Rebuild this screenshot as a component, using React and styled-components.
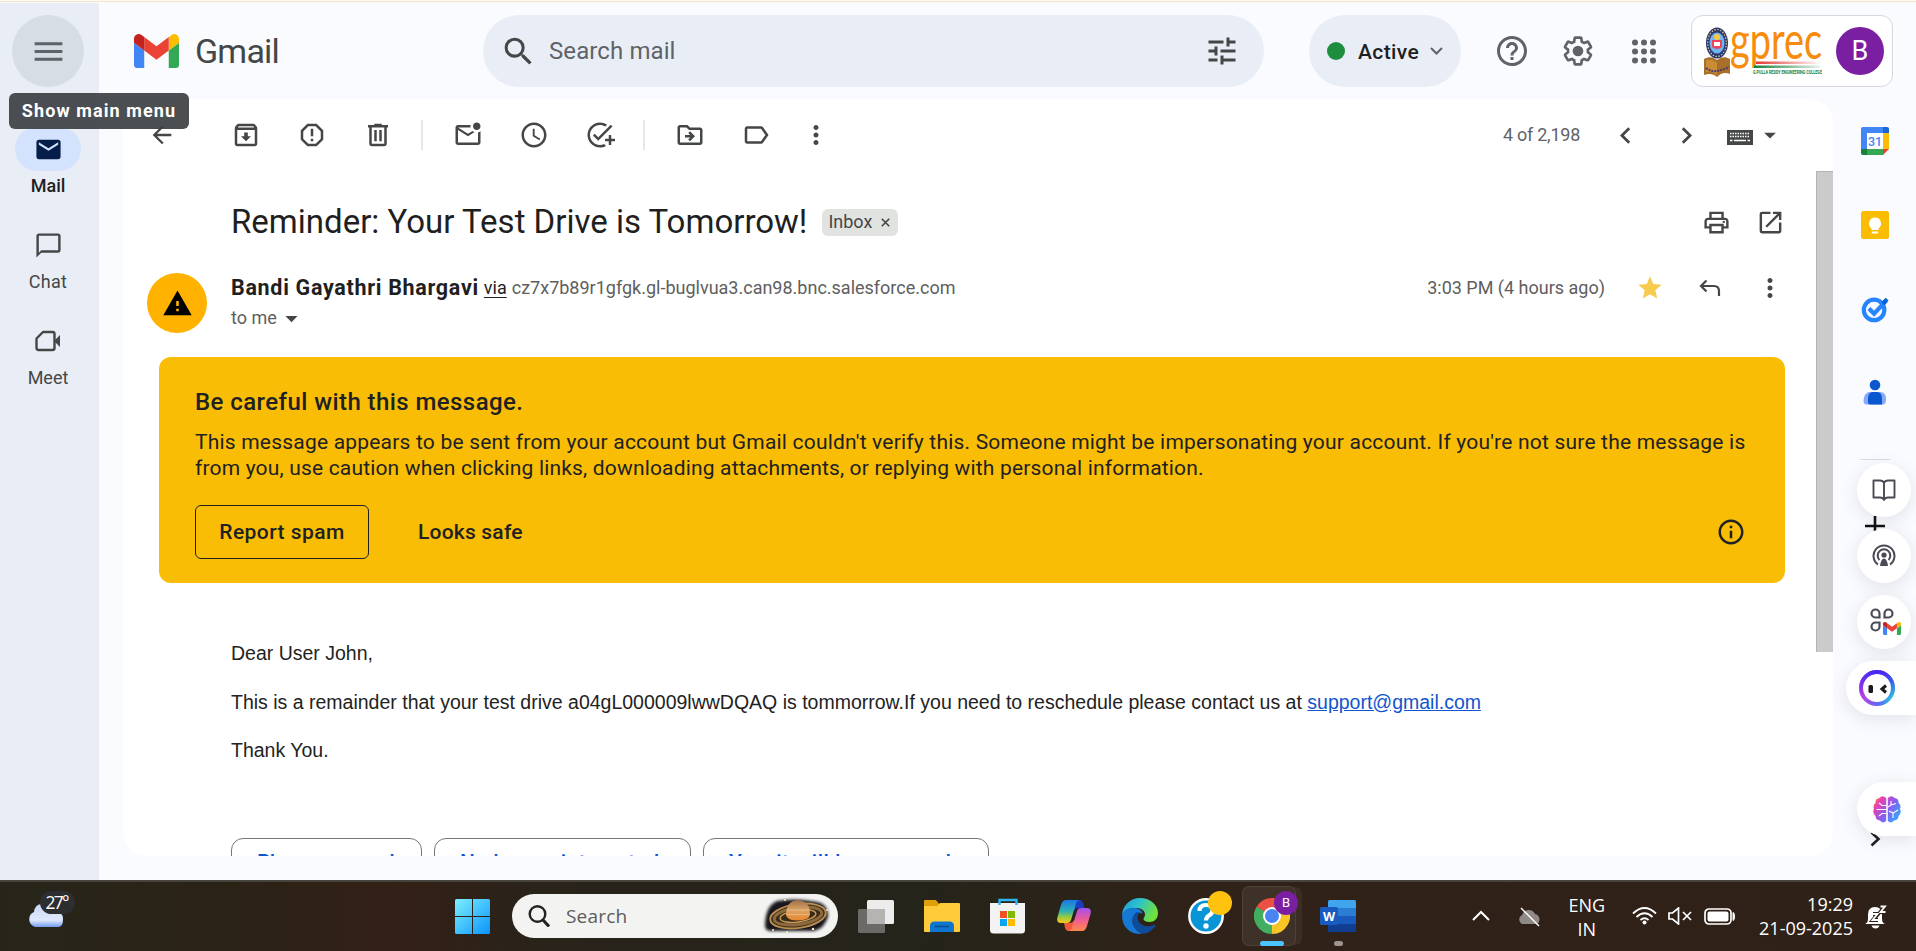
import React from "react";
import styled, { createGlobalStyle } from "styled-components";
import {
  MdOutlineArchive, MdReportGmailerrorred, MdOutlineMarkEmailUnread, MdAccessTime, MdAddTask,
  MdOutlineDriveFileMove, MdOutlineLabel, MdMoreVert, MdArrowBack, MdChevronLeft, MdChevronRight,
  MdArrowDropDown, MdOutlinePrint, MdOpenInNew, MdTune, MdSearch, MdHelpOutline,
  MdStar, MdWarning, MdInfoOutline, MdMenu, MdEmail, MdChatBubbleOutline,
} from "react-icons/md";

const GlobalStyle = createGlobalStyle`
  * { box-sizing: border-box; }
  body { margin: 0; overflow: hidden; background: #f9fbff; font-family: Roboto, "Liberation Sans", sans-serif; color: #1f1f1f; }
  svg { display: block; flex: none; }
`;

const Screen = styled.div`width: 1916px; height: 951px; display: flex; flex-direction: column; overflow: hidden;`;
const TopEdge = styled.div`height: 3px; flex: none; background: #f6e3cb; border: solid #fdfbf8; border-width: 1px 0;`;
const MailApp = styled.div`height: 877px; display: flex; position: relative;`;

const Sidebar = styled.nav`width: 99px; background: #e9eef6; display: flex; flex-direction: column; align-items: center; padding: 12px 3px 0 0;`;
const MenuButton = styled.div`width: 72px; height: 72px; border-radius: 50%; background: #d7dde4; color: #5f6368; display: grid; place-items: center; margin-bottom: 40px;`;
const NavItem = styled.div`height: 96px; display: flex; flex-direction: column; align-items: center; color: #444746;`;
const NavPill = styled.div`width: 66px; height: 44px; border-radius: 22px; display: grid; place-items: center; background: ${(p) => (p.$active ? "#d3e3fd" : "transparent")}; color: ${(p) => (p.$active ? "#041e49" : "#444746")};`;
const Label = styled.span`
  white-space: pre;
  font-size: ${(p) => p.$size || 18}px;
  line-height: ${(p) => p.$lh || 24}px;
  font-weight: ${(p) => p.$weight || 400};
  letter-spacing: ${(p) => p.$ls || 0}px;
  color: ${(p) => p.$color || "#444746"};
`;
const NavLabel = styled(Label)`margin-top: 3px;`;
const Tooltip = styled.div`position: absolute; left: 9px; top: 90px; width: 180px; height: 36px; border-radius: 6px; background: rgba(60, 64, 67, 0.92); display: grid; place-items: center; z-index: 3;`;

const Main = styled.div`flex: 1; display: flex; flex-direction: column;`;
const Header = styled.header`height: 96px; display: flex; align-items: flex-start; padding: 12px 23px 0 35px;`;
const Brand = styled.div`width: 349px; height: 72px; display: flex; align-items: center; gap: 16px;`;
const SearchBar = styled.div`width: 781px; height: 72px; border-radius: 36px; background: #e9eef6; color: #444746; display: flex; align-items: center; padding: 0 24px 0 17px; gap: 12px;`;
const Grow = styled.div`flex: 1;`;
const StatusPill = styled.div`margin-left: 45px; width: 152px; height: 72px; border-radius: 36px; background: #e9eef6; display: flex; align-items: center; padding: 0 18px;`;
const StatusDot = styled.i`width: 18px; height: 18px; border-radius: 50%; background: #1e8e3e; margin-right: 13px;`;
const StatusLabel = styled(Label)`padding-top: 2px;`;
const HeaderTools = styled.div`display: flex; margin-left: 18px; height: 72px; color: #5f6368;`;
const Cell = styled.div`width: ${(p) => p.$w || 66}px; height: 100%; display: grid; place-items: center;`;
const AccountCard = styled.div`width: 202px; height: 72px; border: 1.5px solid #d5d8dd; border-radius: 12px; background: #fff; display: flex; align-items: center; padding-left: 12px; gap: 14px;`;
const Avatar = styled.div`width: 48px; height: 48px; border-radius: 50%; background: #7b1fa2; display: grid; place-items: center;`;

const Content = styled.div`flex: 1; display: flex; padding-left: 24px;`;
const Panel = styled.main`width: 1710px; height: 757px; background: #fff; border-radius: 24px; overflow: hidden; display: flex; flex-direction: column;`;
const Toolbar = styled.div`height: 72px; flex: none; display: flex; align-items: center; color: #444746; padding-right: 49px;`;
const Divider = styled.div`width: 24px; height: 30px; display: flex; padding-left: 10px; &::before { content: ""; width: 1.5px; background: #e3e7ee; }`;
const KeyboardSlot = styled.div`width: 32px; margin-left: 24px; padding-top: 4px; display: flex; justify-content: center;`;
const Scroller = styled.div`flex: 1; display: flex; overflow: hidden;`;
const Message = styled.article`width: 1693px; flex: none;`;
const ScrollThumb = styled.div`width: 17px; height: 481px; background: #cbcbcb; border-left: 1px solid #b4b4b4; border-top: 1px solid #b4b4b4;`;

const SubjectRow = styled.div`margin-top: 21px; height: 60px; padding: 0 31px 0 108px; display: flex; align-items: center; color: #444746;`;
const Chip = styled.div`margin-left: 15px; width: 76px; height: 27px; border-radius: 6px; background: #e1e3e1; display: flex; align-items: center; padding-left: 6px; gap: 9px;`;
const SenderRow = styled.div`height: 105px; padding: 21px 31px 0 24px; display: flex; color: #444746;`;
const WarnAvatar = styled.div`width: 60px; height: 60px; border-radius: 50%; background: #ffb300; color: #000; display: grid; place-items: center; margin-right: 24px;`;
const SenderLines = styled.div`display: flex; flex-direction: column;`;
const Line = styled.div`height: 30px; display: flex; align-items: center;`;
const Via = styled(Label)`text-decoration: underline; text-underline-offset: 3px; margin: 0 5px;`;
const SenderTools = styled.div`margin-left: auto; height: 30px; display: flex; align-items: center;`;
const TimeLabel = styled(Label)`margin-right: 30px;`;

const Banner = styled.section`margin-left: 36px; width: 1626px; height: 226px; border-radius: 12px; background: #fabd05; padding: 30px 36px 0; display: flex; flex-direction: column;`;
const BannerTitle = styled(Label)`margin-bottom: 12px;`;
const BannerActions = styled.div`margin-top: 24px; display: flex; align-items: center; height: 54px; padding-right: 3px;`;
const OutlineButton = styled.div`width: 174px; height: 54px; border: 1.5px solid #1f1f1f; border-radius: 6px; display: grid; place-items: center; margin-right: 49px;`;

const MailBody = styled.div`padding: 58px 0 0 108px; display: flex; flex-direction: column; align-items: flex-start; gap: 24.5px;`;
const BodyText = styled(Label)`font-family: "Liberation Sans", Arial, sans-serif;`;
const MailLink = styled.a`color: #1155cc; text-decoration: underline;`;
const Replies = styled.div`display: flex; gap: 12px; padding-left: 108px; margin-top: 76px;`;
const Reply = styled.div`width: ${(p) => p.$w}px; height: 54px; border: 1.5px solid #747775; border-radius: 12px; padding: 11px 0 0 25px;`;

const Rail = styled.aside`width: 83px; padding-left: 1px; display: flex; flex-direction: column; align-items: center;`;
const RailItem = styled.div`height: ${(p) => p.$h || 84}px; display: grid; place-items: center;`;
const RailRule = styled.div`width: 30px; height: 1px; background: #dadce0; margin-top: 26px;`;
const Floating = styled.div`position: absolute; right: ${(p) => (p.$wide ? 0 : 5)}px; top: ${(p) => p.$top}px; width: ${(p) => p.$w || 54}px; height: 54px; border-radius: ${(p) => (p.$wide ? "27px 0 0 27px" : "27px")}; background: #fff; box-shadow: 0 4px 18px rgba(60, 64, 80, 0.13); display: flex; align-items: center; padding-left: ${(p) => p.$pl || 0}px; justify-content: ${(p) => (p.$wide ? "flex-start" : "center")}; z-index: 2;`;
const RailMark = styled.div`position: absolute; left: ${(p) => p.$left}px; top: ${(p) => p.$top}px;`;

const Taskbar = styled.footer`height: 71px; flex: none; border-top: 2px solid #47443d; background: linear-gradient(90deg, #27251a 0%, #2b2216 12%, #332016 21%, #29231a 28%, #25241a 48%, #2a2319 55%, #302218 62%, #2f2118 100%); display: flex;`;
const Weather = styled.div`width: 455px; padding: 9px 0 0 27px;`;
const TaskSearch = styled.div`width: 326px; height: 44px; margin: 12px 5px 0 22px; border-radius: 22px; background: #f3f3f1; display: flex; align-items: center; padding: 0 5px 0 16px; gap: 16px;`;
const StartLogo = styled.div`padding-top: 17px;`;
const AppSlot = styled.div`width: 66px; height: 69px; display: grid; place-items: center; padding-bottom: 2px; position: relative;`;
const ActiveTile = styled.div`position: absolute; left: 3px; top: 4px; width: 54px; height: 60px; border-radius: 7px; background: rgba(255, 255, 255, 0.07); border: 1px solid rgba(255, 255, 255, 0.08); box-shadow: 7px 0 0 -1px rgba(255, 255, 255, 0.05);`;
const RunMark = styled.i`position: absolute; bottom: 5px; left: ${(p) => p.$left}px; width: ${(p) => p.$w}px; height: 5px; border-radius: 3px; background: ${(p) => p.$c};`;
const Badge = styled.div`position: absolute; left: 35px; top: 9px; width: 24px; height: 24px; border-radius: 50%; background: ${(p) => p.$c}; display: grid; place-items: center;`;
const TaskLabel = styled(Label)`font-family: "Open Sans", "Noto Sans", sans-serif; color: ${(p) => p.$color || "#fff"};`;
const Tray = styled.div`margin-left: auto; display: flex; padding-right: 29px; align-items: flex-start;`;
const TrayItem = styled.div`padding-top: ${(p) => p.$t}px; margin-right: ${(p) => p.$r}px; display: flex; flex-direction: column; align-items: ${(p) => p.$a || "center"};`;

const Svg = ({ w, h = w, vb = "0 0 24 24", children, ...r }) => (
  <svg width={w} height={h} viewBox={vb} fill="none" {...r}>{children}</svg>
);

const GmailMark = ({ w, h }) => (
  <Svg w={w} h={h} vb="52 42 88 66" preserveAspectRatio="none">
    <path fill="#4285f4" d="M58 108h14V74L52 59v43c0 3.32 2.69 6 6 6" />
    <path fill="#34a853" d="M120 108h14c3.32 0 6-2.69 6-6V59l-20 15" />
    <path fill="#fbbc04" d="M120 48v26l20-15v-8c0-7.42-8.47-11.65-14.4-7.2" />
    <path fill="#ea4335" d="M72 74V48l24 18 24-18v26L96 92" />
    <path fill="#c5221f" d="M52 51v8l20 15V48l-5.6-4.2c-5.94-4.45-14.4-.22-14.4 7.2" />
  </Svg>
);

const Gear = () => (
  <Svg w={36}>
    <g transform="translate(1.3 1.3) scale(.89)">
      <path stroke="#5f6368" strokeWidth="2" d="M19.43 12.98c.04-.32.07-.64.07-.98 0-.34-.03-.66-.07-.98l2.11-1.65c.19-.15.24-.42.12-.64l-2-3.46c-.09-.16-.26-.25-.44-.25-.06 0-.12.01-.17.03l-2.49 1c-.52-.4-1.08-.73-1.69-.98l-.38-2.65C14.46 2.18 14.25 2 14 2h-4c-.25 0-.46.18-.49.42l-.38 2.65c-.61.25-1.17.59-1.69.98l-2.49-1c-.06-.02-.12-.03-.18-.03-.17 0-.34.09-.43.25l-2 3.46c-.13.22-.07.49.12.64l2.11 1.65c-.04.32-.07.65-.07.98s.03.66.07.98l-2.11 1.65c-.19.15-.24.42-.12.64l2 3.46c.09.16.26.25.44.25.06 0 .12-.01.17-.03l2.49-1c.52.4 1.08.73 1.69.98l.38 2.65c.03.24.24.42.49.42h4c.25 0 .46-.18.49-.42l.38-2.65c.61-.25 1.17-.59 1.69-.98l2.49 1c.06.02.12.03.18.03.17 0 .34-.09.43-.25l2-3.46c.12-.22.07-.49-.12-.64z" />
      <circle cx="12" cy="12" r="4" fill="#5f6368" />
    </g>
  </Svg>
);

const AppsGrid = () => (
  <Svg w={24} h={25} vb="0 0 24 25" fill="#5f6368">
    {[3, 12, 21].map((x) => [3.500, 12.500, 21.500].map((y) => <circle key={x + "-" + y} cx={x} cy={y} r="3" fill="#5f6368" />))}
  </Svg>
);

const CollegeLogo = () => (
  <Svg w={118} h={52} vb="0 0 118 52">
    <defs>
      <linearGradient id="bar1"><stop stopColor="#e53935" /><stop offset="1" stopColor="#e53935" stopOpacity="0" /></linearGradient>
      <linearGradient id="bar2"><stop stopColor="#15803d" /><stop offset="1" stopColor="#15803d" stopOpacity="0.1" /></linearGradient>
    </defs>
    <path d="M0 34c5-3 9-2 13 1 4-3 8-4 13-1v15c-5-2-9-1-13 3-3-3-8-4-13-2z" fill="#a9702a" />
    <path d="M2 35c4-1 8 0 11 3v12c-3-3-7-4-11-3z" fill="#c98d35" />
    <path d="M2 43q5 4 11 3t12-4" stroke="#4a3b6b" strokeWidth="2" strokeDasharray="2 1" />
    <ellipse cx="13" cy="18" rx="11" ry="15.500" fill="#2f3a6e" />
    <ellipse cx="13" cy="18" rx="9.300" ry="13.500" stroke="#d9c48a" strokeWidth="1.200" strokeDasharray="1.500 1.500" />
    <ellipse cx="13" cy="18" rx="7.500" ry="10.500" fill="#6fb6f2" />
    <path d="M8 15h10v7q-5 4-10 0z" fill="#e8455a" />
    <path d="M10 17h6v4h-6z" fill="#fff" />
    <circle cx="13" cy="12" r="3" fill="#ffc93c" />
    <text x="26" y="34" textLength="92" lengthAdjust="spacingAndGlyphs" fontFamily="Lato" fontSize="53" fill="#f78c0c">gprec</text>
    <rect x="52" y="36.500" width="66" height="2.500" fill="url(#bar1)" />
    <rect x="50" y="40.500" width="66" height="2.500" fill="url(#bar2)" />
    <text x="49" y="49" textLength="69" lengthAdjust="spacingAndGlyphs" fontFamily="Roboto" fontWeight="700" fontSize="6" fill="#15803d">G.PULLA REDDY ENGINEERING COLLEGE</text>
  </Svg>
);

const TrashIcon = () => (
  <Svg w={30}><path fill="currentColor" d="M15 4V3H9v1H4v2h1v13c0 1.100.9 2 2 2h10c1.100 0 2-.9 2-2V6h1V4h-5zm2 15H7V6h10v13zM9 8h2v9H9zm4 0h2v9h-2z" /></Svg>
);
const KeyboardIcon = () => (
  <Svg w={26} h={15} vb="0 0 26 15">
    <rect width="26" height="15" fill="#444746" />
    <path d="M3 3.500h20M3 6.500h20" stroke="#fff" strokeWidth="1.500" strokeDasharray="1.500 1" />
    <path d="M3 10.500h2.500M7 10.500h12M20.500 10.500H23" stroke="#fff" strokeWidth="1.500" />
  </Svg>
);
const MeetIcon = () => (
  <Svg w={26} h={22} vb="0 0 26 22"><path d="M8 2h9.500q2 0 2 2v14q0 2-2 2h-14q-2 0-2-2V8.500z" stroke="currentColor" strokeWidth="2.400" strokeLinejoin="round" /><path d="M19 11l6-6v12z" fill="currentColor" /></Svg>
);
const ReplyIcon = () => (
  <Svg w={22} h={18} vb="0 0 22 18" stroke="currentColor" strokeWidth="2.200"><path d="M7.500 1.500L2 7l5.500 5.500M2 7h13q5 0 5 5v5" /></Svg>
);
const Down = ({ w = 13, h = 8 }) => (
  <Svg w={w} h={h} vb="0 0 13 8"><path d="M1 1l5.500 5.500L12 1" stroke="#5f6368" strokeWidth="2" /></Svg>
);

const CalendarIcon = () => (
  <Svg w={28} vb="0 0 28 28">
    <path d="M2 0h20v6H6v16H0V2q0-2 2-2z" fill="#4285f4" /><path d="M22 0h4q2 0 2 2v4h-6z" fill="#1967d2" />
    <path d="M22 6h6v16h-6z" fill="#fbbc04" /><path d="M6 22h16v6H6z" fill="#34a853" /><path d="M0 22h6v6H2q-2 0-2-2z" fill="#188038" />
    <path d="M22 22h6l-6 6z" fill="#ea4335" /><path d="M6 6h16v16H6z" fill="#fff" />
    <text x="14" y="18.500" textAnchor="middle" fontFamily="Roboto" fontWeight="500" fontSize="12.500" fill="#4285f4">31</text>
  </Svg>
);
const KeepIcon = () => (
  <Svg w={28} vb="0 0 28 28"><rect width="28" height="28" rx="2.500" fill="#fbbc04" /><path d="M14 6.500a6 6 0 0 0-3.500 10.900V19h7v-1.600A6 6 0 0 0 14 6.500zM10.800 20.500h6.400v2h-6.400z" fill="#fff" /></Svg>
);
const TasksIcon = () => (
  <Svg w={28} vb="0 0 30 30"><circle cx="14" cy="16" r="11" stroke="#2684fc" strokeWidth="4.500" /><path d="M8.500 14.500l5.500 5.500L27 6" stroke="#2684fc" strokeWidth="4.600" /><path d="M22 7.500l4.500-4.500 3 3-4.500 5z" fill="#0066da" /></Svg>
);
const ContactsIcon = () => (
  <Svg w={24} h={26} vb="0 0 24 26"><circle cx="12" cy="6" r="5.300" fill="#0b57d0" /><path d="M6 13h11q6 0 6 7 0 5.500-3 5.500H3.500q-3 0-3-4Q1 14 6 13z" fill="#86a9ff" /><path d="M5 20q0-7 5-7h4q5 0 5 7v5.500H7q-2 0-2-3z" fill="#0b57d0" /></Svg>
);
const BookIcon = () => (
  <Svg w={24} h={24} stroke="#4b4b55" strokeWidth="1.900" strokeLinejoin="round"><path d="M12 5q-1-2.500-4-2.500H1.500v17H8q3 0 4 2.500 1-2.500 4-2.500h6.500v-17H16q-3 0-4 2.500zv16" /></Svg>
);
const PodIcon = () => (
  <Svg w={24} h={24} stroke="#4b4b55" strokeWidth="2"><path d="M6 20.500a10.500 10.500 0 1 1 12 0" /><path d="M7.500 16a6.300 6.300 0 1 1 9 0" /><circle cx="12" cy="11" r="2.600" fill="#4b4b55" stroke="none" /><path d="M12 14.500q3 0 4 7.500H8q1-7.500 4-7.500z" fill="#4b4b55" stroke="none" /></Svg>
);
const AppsMark = () => (
  <Svg w={34} h={30} vb="0 0 34 30">
    <g stroke="#4b4b55" strokeWidth="2.200"><path d="M6.500 2.500a4 4 0 1 0 0 8h4v-4a4 4 0 0 0-4-4zM19.500 2.500a4 4 0 0 1 0 8h-4v-4a4 4 0 0 1 4-4zM6.500 23.500a4 4 0 1 1 0-8h4v4a4 4 0 0 1-4 4z" /></g>
    <svg x="14" y="15" width="18" height="13"><GmailMark w={18} h={13} /></svg>
  </Svg>
);
const BotIcon = () => (
  <Svg w={36} vb="0 0 36 36">
    <defs><linearGradient id="bot" x1="0" y1="1" x2="1" y2="1"><stop stopColor="#c13de0" /><stop offset=".55" stopColor="#5a6bf5" /><stop offset="1" stopColor="#25c6d8" /></linearGradient>
      <linearGradient id="botTop" x1="0" y1="0" x2="0" y2="1"><stop stopColor="#4a28f2" /><stop offset=".8" stopColor="#4a28f2" stopOpacity="0" /></linearGradient></defs>
    <circle cx="18" cy="18" r="16" stroke="url(#bot)" strokeWidth="4" /><circle cx="18" cy="18" r="16" stroke="url(#botTop)" strokeWidth="4" />
    <rect x="9.500" y="15" width="4.500" height="8" rx="1.500" fill="#1b1b1f" /><path d="M27 15.500l-4 3.500 4 3.500" stroke="#1b1b1f" strokeWidth="3" />
  </Svg>
);
const BrainIcon = () => (
  <Svg w={28} h={27} vb="0 0 28 27">
    <defs><linearGradient id="brain" x1="0" y1="0" x2="1" y2=".7"><stop stopColor="#ff9a2e" /><stop offset=".25" stopColor="#ee3fae" /><stop offset=".6" stopColor="#8a5cf0" /><stop offset="1" stopColor="#35a5ff" /></linearGradient></defs>
    <path fill="url(#brain)" d="M13.200 2Q9-1.500 6.500 2 2 2.500 2.500 7-.5 9 1 13q-2 4 1.500 7 0 4 4.500 4.500 3 3.500 6.200.5zM14.800 2Q19-1.500 21.500 2 26 2.500 25.500 7q3 2 1.500 6 2 4-1.500 7 0 4-4.500 4.500-3 3.500-6.200.5z" />
    <path d="M3.500 13.500H13M6 7l3 2.500h4M6 20l3-2.500h4M18 5v4l5-1.500M18 9l-3 2M16 15l4 2 5-3M20 17v5" stroke="#fff" strokeWidth="1.100" />
  </Svg>
);

const WeatherIcon = () => (
  <Svg w={50} h={40} vb="0 0 50 40">
    <defs><linearGradient id="cl" x1="0" y1="0" x2="0" y2="1"><stop stopColor="#c9d8f7" /><stop offset=".7" stopColor="#dfe8fb" /><stop offset="1" stopColor="#6f9bf0" /></linearGradient></defs>
    <path d="M8 36a8 8 0 0 1-1-15Q8 13 15 13q7-1 9 7 12-1 12 8t-6 8z" fill="url(#cl)" />
    <rect x="13" y="0" width="35" height="23" rx="11.500" fill="#2d2e30" />
    <text x="30.500" y="18" textAnchor="middle" fontFamily="Open Sans" fontSize="17.500" fill="#fff" textLength="24">27°</text>
  </Svg>
);
const WindowsIcon = () => (
  <Svg w={35} vb="0 0 35 35"><defs><linearGradient id="win" x1="0" y1="0" x2="1" y2="1"><stop stopColor="#7df0ff" /><stop offset="1" stopColor="#0a93fb" /></linearGradient></defs>
    <path fill="url(#win)" d="M1.500 0H17v17H0V1.500Q0 0 1.500 0zM18 0h15.500Q35 0 35 1.500V17H18zM0 18h17v17H1.500Q0 35 0 33.500zM18 18h17v15.500q0 1.500-1.500 1.500H18z" /></Svg>
);
const PlanetIcon = () => (
  <Svg w={72} h={40} vb="0 0 72 40">
    <defs><filter id="soft" x="-20%" y="-20%" width="140%" height="140%"><feGaussianBlur stdDeviation="1.800" /></filter>
      <linearGradient id="pl" x1="0" y1="0" x2="0" y2="1"><stop stopColor="#a06f47" /><stop offset=".5" stopColor="#dba467" /><stop offset="1" stopColor="#e8872e" /></linearGradient></defs>
    <path d="M4 30Q4 10 16 5q20-4 44 2 8 5 7 14-4 12-14 14H10q-6 0-6-5z" fill="#15131c" filter="url(#soft)" />
    <g transform="rotate(-8 37 20)"><ellipse cx="37" cy="20" rx="28" ry="12" fill="#3a2a18" stroke="#b98c4f" strokeWidth="2" /><ellipse cx="37" cy="20" rx="24" ry="8.500" stroke="#8d6a3c" strokeWidth="3" /><ellipse cx="37" cy="20" rx="18" ry="6" stroke="#c79a5a" strokeWidth="1.500" /></g>
    <path d="M25 19q0-14 12-15 12 1 12 14 0 6-12 6.500Q26 24.500 25 19z" fill="url(#pl)" />
    <path d="M26 14h22M25.500 18.500h23" stroke="#f0c48a" strokeWidth="1.200" opacity=".7" />
    <g fill="#fff3c8"><circle cx="12" cy="34" r="1" /><circle cx="26" cy="36" r=".9" /><circle cx="52" cy="33" r="1.200" /><circle cx="66" cy="14" r=".9" /><circle cx="24" cy="4" r=".9" /></g>
  </Svg>
);
const TaskViewIcon = () => (
  <Svg w={36} h={34} vb="0 0 36 34"><rect x="9" y="1" width="27" height="24" rx="1.500" fill="#ececec" /><rect x="0" y="10" width="27" height="24" rx="1.500" fill="#6c6a68" /><path d="M9 10h18v15H9z" fill="#b5b4b3" /></Svg>
);
const ExplorerIcon = () => (
  <Svg w={36} h={34} vb="0 0 36 34"><path d="M0 2q0-1 1-1h10q1 0 2 1.200L15 5v8H0z" fill="#e0a008" /><path d="M0 7h13l3-3h19q1 0 1 1v27q0 1-1 1H1q-1 0-1-1z" fill="#fecb3a" /><path d="M6 33v-6q0-4.500 4.500-4.500h15q4.500 0 4.500 4.500v6z" fill="#0f76cf" /><path d="M11 27.500h14" stroke="#0b4d8d" strokeWidth="1.600" /></Svg>
);
const StoreIcon = () => (
  <Svg w={36} h={36} vb="0 0 36 36"><path d="M0 5h35v27q0 3.500-3.500 3.500h-28Q0 35.500 0 32z" fill="#f3f3f3" /><path d="M9.500 7V2h17v5" stroke="#2fb4f4" strokeWidth="2.400" /><path d="M10 13h7v7h-7z" fill="#f25022" /><path d="M18 13h7v7h-7z" fill="#7fba00" /><path d="M10 21h7v7h-7z" fill="#00a4ef" /><path d="M18 21h7v7h-7z" fill="#ffb900" /></Svg>
);
const CopilotIcon = () => (
  <Svg w={34} h={31} vb="0 0 34 31">
    <defs><linearGradient id="c1" x1="0" y1="0" x2="0" y2="1"><stop stopColor="#1a78e8" /><stop offset=".5" stopColor="#2fb2b0" /><stop offset=".75" stopColor="#9ccc3c" /><stop offset="1" stopColor="#f9c51c" /></linearGradient>
      <linearGradient id="c2" x1="0" y1="0" x2="0" y2="1"><stop stopColor="#a34ff0" /><stop offset=".5" stopColor="#ee5b96" /><stop offset="1" stopColor="#ff8a4a" /></linearGradient></defs>
    <path d="M16 0h7q2 0 3 3l1.500 5H22q-4 0-5 3z" fill="#173fc0" /><path d="M18 31h-7q-2 0-3-3l-1-5h5q4 0 5-3z" fill="#ef5a3c" />
    <path d="M9 0h14q-3 0-4 3.500L14 20q-1 3-4 3H4q-5 0-3.500-6L4 5q1.500-5 5-5z" fill="url(#c1)" /><path d="M25 31H11q3 0 4-3.500L20 11q1-3 4-3h6q5 0 3.500 6L30 26q-1.500 5-5 5z" fill="url(#c2)" />
  </Svg>
);
const EdgeIcon = () => (
  <Svg w={36} vb="0 0 36 36">
    <defs><linearGradient id="e1" x1="0" y1="0" x2="1" y2=".4"><stop stopColor="#1f9be0" /><stop offset=".5" stopColor="#2fc3c8" /><stop offset="1" stopColor="#6fe03c" /></linearGradient></defs>
    <path d="M0 18A18 18 0 0 1 18 0c11 0 18 7.500 18 15 0 6-4 9-8.500 9-4 0-6-1.500-6-3s1.500-2 1.500-4.500c0-4-4-6.500-9-6.500C6 10 1 13 0 18z" fill="url(#e1)" />
    <path d="M0 18c1-6 7-9 13-8 4 .5 7.500 3 7.500 5.500C14 13 9 20 11 26c1.500 5 6 9 10 9.500C9 38 0 29 0 18z" fill="#1578d4" />
    <path d="M15 14c-5 3-6 9-3 14.500 3 5 7 7.500 11 7 4-1 8-4 10.500-7.500.5-1-.5-1.500-1.500-1-7 3-14 .5-16-5-1-3-.5-6 2-7.500z" fill="#0e4c9b" />
  </Svg>
);
const HelpAppIcon = () => (
  <Svg w={36} vb="0 0 36 36"><circle cx="18" cy="18" r="16.700" fill="#0795d8" stroke="#fff" strokeWidth="2.400" /><path d="M11.500 13q0-6 6.500-6t6.500 5.500q0 3-3.500 5-3 1.800-3 5" stroke="#fff" strokeWidth="4.200" /><circle cx="18" cy="28" r="2.700" fill="#fff" /></Svg>
);
const ChromeIcon = () => (
  <Svg w={36} vb="0 0 36 36"><path d="M18 18L2.400 9A18 18 0 0 1 33.600 9z" fill="#ea4335" /><path d="M18 18L33.600 9A18 18 0 0 1 18 36z" fill="#fbc116" /><path d="M18 18v18A18 18 0 0 1 2.400 9z" fill="#34a853" /><path d="M10.500 23L2.400 9 18 18zM18 36l8-13-8-5z" fill="#34a853" /><path d="M18 36l8.500-14L18 18z" fill="#fbc116" /><circle cx="18" cy="18" r="9" fill="#fff" /><circle cx="18" cy="18" r="7" fill="#3b7cf0" /></Svg>
);
const WordIcon = () => (
  <Svg w={36} h={32} vb="0 0 36 32"><path d="M8 1.500Q8 0 9.500 0h25Q36 0 36 1.500V8H8z" fill="#41a5ee" /><path d="M8 8h28v8H8z" fill="#2b7cd3" /><path d="M8 16h28v8H8z" fill="#185abd" /><path d="M8 24h28v6.500q0 1.500-1.500 1.500h-25Q8 32 8 30.500z" fill="#103f91" /><rect y="7" width="18" height="18" rx="1.500" fill="#185abd" /><text x="9" y="20.500" textAnchor="middle" fontFamily="Open Sans" fontWeight="700" fontSize="12.500" fill="#fff">W</text></Svg>
);

const toolbarA = [MdOutlineArchive, MdReportGmailerrorred, TrashIcon];
const toolbarB = [MdOutlineMarkEmailUnread, MdAccessTime, MdAddTask];
const toolbarC = [MdOutlineDriveFileMove, MdOutlineLabel];
const ToolGroup = ({ icons }) => icons.map((I, i) => <Cell key={i}><I size={30} /></Cell>);

export default function App() {
  return (
    <Screen>
      <GlobalStyle />
      <TopEdge />
      <MailApp>
        <Sidebar>
          <MenuButton><MdMenu size={37} /></MenuButton>
          <NavItem><NavPill $active><MdEmail size={29} /></NavPill><NavLabel $weight={500} $color="#1f1f1f">Mail</NavLabel></NavItem>
          <NavItem><NavPill><MdChatBubbleOutline size={29} /></NavPill><NavLabel $ls={0.3}>Chat</NavLabel></NavItem>
          <NavItem><NavPill><MeetIcon /></NavPill><NavLabel>Meet</NavLabel></NavItem>
        </Sidebar>
        <Tooltip><Label $weight={700} $color="#fff" $ls={1.1}>Show main menu</Label></Tooltip>

        <Main>
          <Header>
            <Brand><GmailMark w={45} h={34} /><Label $size={34} $lh={40} $ls={-0.8}>Gmail</Label></Brand>
            <SearchBar><MdSearch size={37} /><Label $size={24} $lh={30} $color="#5f6368" $ls={0.1}>Search mail</Label><Grow /><MdTune size={36} /></SearchBar>
            <StatusPill><StatusDot /><StatusLabel $size={21} $weight={500} $color="#1f1f1f" $ls={0.4}>Active</StatusLabel><Grow /><Down /></StatusPill>
            <HeaderTools><Cell><MdHelpOutline size={36} /></Cell><Cell><Gear /></Cell><Cell><AppsGrid /></Cell></HeaderTools>
            <Grow />
            <AccountCard><CollegeLogo /><Avatar><Label $size={27} $lh={30} $color="#fff">B</Label></Avatar></AccountCard>
          </Header>

          <Content>
            <Panel>
              <Toolbar>
                <Cell $w={78}><MdArrowBack size={28} /></Cell><Cell $w={12} />
                <ToolGroup icons={toolbarA} /><Divider />
                <ToolGroup icons={toolbarB} /><Divider />
                <ToolGroup icons={toolbarC} />
                <Cell $w={54}><MdMoreVert size={30} /></Cell>
                <Grow />
                <Label $color="#5f6368" $ls={-0.25}>4 of 2,198</Label>
                <Cell $w={90}><MdChevronLeft size={33} /></Cell>
                <Cell $w={30}><MdChevronRight size={33} /></Cell>
                <KeyboardSlot><KeyboardIcon /></KeyboardSlot>
                <MdArrowDropDown size={28} />
              </Toolbar>
              <Scroller>
                <Message>
                  <SubjectRow>
                    <Label $size={33} $lh={40} $color="#1f1f1f">Reminder: Your Test Drive is Tomorrow!</Label>
                    <Chip><Label>Inbox</Label><Svg w={9} vb="0 0 9 9"><path d="M.8.800l7.400 7.400M8.200.800L.8 8.200" stroke="#444746" strokeWidth="1.600" /></Svg></Chip>
                    <Grow />
                    <Cell $w={78}><MdOutlinePrint size={29} /></Cell><Cell $w={30}><MdOpenInNew size={29} /></Cell>
                  </SubjectRow>
                  <SenderRow>
                    <WarnAvatar><MdWarning size={31} /></WarnAvatar>
                    <SenderLines>
                      <Line>
                        <Label $size={21.5} $weight={700} $color="#1f1f1f" $ls={0.69}>Bandi Gayathri Bhargavi</Label>
                        <Via $color="#222">via</Via>
                        <Label $color="#5e5e5e">cz7x7b89r1gfgk.gl-buglvua3.can98.bnc.salesforce.com</Label>
                      </Line>
                      <Line><Label $color="#5e5e5e">to me</Label><MdArrowDropDown size={29} /></Line>
                    </SenderLines>
                    <SenderTools>
                      <TimeLabel $color="#5e5e5e">3:03 PM (4 hours ago)</TimeLabel>
                      <Cell $w={30}><MdStar size={28} color="#f7cb4d" /></Cell><Cell $w={90}><ReplyIcon /></Cell><Cell $w={30}><MdMoreVert size={30} /></Cell>
                    </SenderTools>
                  </SenderRow>
                  <Banner>
                    <BannerTitle $size={24} $lh={30} $weight={500} $color="#202124" $ls={0.43}>Be careful with this message.</BannerTitle>
                    <Label $size={21} $lh={26} $color="#202124" $ls={0.2}>This message appears to be sent from your account but Gmail couldn't verify this. Someone might be impersonating your account. If you're not sure the message is</Label>
                    <Label $size={21} $lh={26} $color="#202124" $ls={0.17}>from you, use caution when clicking links, downloading attachments, or replying with personal information.</Label>
                    <BannerActions>
                      <OutlineButton><Label $size={21} $weight={500} $color="#202124" $ls={0.45}>Report spam</Label></OutlineButton>
                      <Label $size={21} $weight={500} $color="#202124" $ls={0.2}>Looks safe</Label>
                      <Grow /><MdInfoOutline size={30} color="#202124" />
                    </BannerActions>
                  </Banner>
                  <MailBody>
                    <BodyText $size={19.5} $color="#222">Dear User John,</BodyText>
                    <BodyText $size={19.5} $color="#222">This is a remainder that your test drive a04gL000009lwwDQAQ is tommorrow.If you need to reschedule please contact us at <MailLink>support@gmail.com</MailLink></BodyText>
                    <BodyText $size={19.5} $color="#222">Thank You.</BodyText>
                  </MailBody>
                  <Replies>
                    <Reply $w={191}><Label $size={21} $weight={500} $color="#0b57d0" $ls={-0.55}>Please proceed.</Label></Reply>
                    <Reply $w={257}><Label $size={21} $weight={500} $color="#0b57d0" $ls={0.4}>No longer interested.</Label></Reply>
                    <Reply $w={286}><Label $size={21} $weight={500} $color="#0b57d0" $ls={0.6}>Yes, it will be removed.</Label></Reply>
                  </Replies>
                </Message>
                <ScrollThumb />
              </Scroller>
            </Panel>
            <Rail>
              <RailItem><CalendarIcon /></RailItem>
              <RailItem><KeepIcon /></RailItem>
              <RailItem $h={83}><TasksIcon /></RailItem>
              <RailItem $h={83}><ContactsIcon /></RailItem>
              <RailRule />
            </Rail>
          </Content>
        </Main>

        <RailMark $left={1865} $top={513}><Svg w={20} vb="0 0 20 20"><path d="M10 0v20M0 10h20" stroke="#111" strokeWidth="2.600" /></Svg></RailMark>
        <RailMark $left={1870} $top={828}><Svg w={11} h={16} vb="0 0 11 16"><path d="M1.500 1.500L8.500 8l-7 6.500" stroke="#1f1f1f" strokeWidth="2.600" /></Svg></RailMark>
        <Floating $top={460}><BookIcon /></Floating>
        <Floating $top={526}><PodIcon /></Floating>
        <Floating $top={592} $pl={4}><AppsMark /></Floating>
        <Floating $top={658} $wide $w={70} $pl={13}><BotIcon /></Floating>
        <Floating $top={779} $wide $w={59} $pl={16}><BrainIcon /></Floating>
      </MailApp>

      <Taskbar>
        <Weather><WeatherIcon /></Weather>
        <StartLogo><WindowsIcon /></StartLogo>
        <TaskSearch>
          <Svg w={22} vb="0 0 22 22" stroke="#222" strokeWidth="2.400"><circle cx="9.500" cy="9" r="7.800" /><path d="M15 15l6 6.500" strokeWidth="3" /></Svg>
          <TaskLabel $size={19} $color="#5c5c5c" $ls={0.2}>Search</TaskLabel><Grow /><PlanetIcon />
        </TaskSearch>
        <AppSlot><TaskViewIcon /></AppSlot>
        <AppSlot><ExplorerIcon /></AppSlot>
        <AppSlot><StoreIcon /></AppSlot>
        <AppSlot><CopilotIcon /></AppSlot>
        <AppSlot><EdgeIcon /></AppSlot>
        <AppSlot><HelpAppIcon /><Badge $c="#ffc20e" /></AppSlot>
        <AppSlot><ActiveTile /><ChromeIcon /><Badge $c="#7b1fa2"><Label $size={13} $lh={16} $color="#fff">B</Label></Badge><RunMark $left={21} $w={24} $c="#4cc2ff" /></AppSlot>
        <AppSlot><WordIcon /><RunMark $left={29} $w={9} $c="#9c9590" /></AppSlot>
        <Tray>
          <TrayItem $t={28} $r={27}><Svg w={18} h={11} vb="0 0 18 11"><path d="M1 10l8-8 8 8" stroke="#fff" strokeWidth="2" /></Svg></TrayItem>
          <TrayItem $t={25} $r={26}><Svg w={25} h={20} vb="0 0 25 20"><path d="M5 17a5 5 0 0 1 0-9 7 7 0 0 1 13-1 5.500 5.500 0 0 1 2 10z" fill="#8f8a86" /><path d="M4 1l18 18" stroke="#fff" strokeWidth="1.400" /></Svg></TrayItem>
          <TrayItem $t={11} $r={27}><TaskLabel>ENG</TaskLabel><TaskLabel>IN</TaskLabel></TrayItem>
          <TrayItem $t={25} $r={11}><Svg w={25} h={18} vb="0 0 25 18" stroke="#fff" strokeWidth="1.800"><path d="M1 6.500q11.500-11 23 0M4.500 10q8-7.500 16 0M8.500 13q4-3.500 8 0" /><circle cx="12.500" cy="15.500" r="2" fill="#fff" stroke="none" /></Svg></TrayItem>
          <TrayItem $t={25} $r={12}><Svg w={24} h={18} vb="0 0 24 18" stroke="#fff" strokeWidth="1.700"><path d="M1 6h3.500L10.500 1v16l-6-5H1zM15 5l8 8M23 5l-8 8" /></Svg></TrayItem>
          <TrayItem $t={26} $r={24}><Svg w={31} h={17} vb="0 0 31 17"><rect x="1" y="1" width="26" height="15" rx="4" stroke="#fff" strokeWidth="1.700" /><rect x="3.500" y="3.500" width="21" height="10" rx="2" fill="#fff" /><path d="M29 4.500q1.500 0 1.500 4t-1.500 4z" fill="#fff" stroke="#fff" /></Svg></TrayItem>
          <TrayItem $t={10} $r={12} $a="flex-end"><TaskLabel>19:29</TaskLabel><TaskLabel>21-09-2025</TaskLabel></TrayItem>
          <TrayItem $t={23} $r={0}><Svg w={22} h={24} vb="0 0 22 24"><path d="M0 19q3-1 3-5V9.500Q3 2 10 2t7 8v4q0 4 3 5zM6.500 20.500h8q-1 3-4 3t-4-3z" fill="#fff" /><path d="M8 9h5l-5 6h5M15.500 1.500h4.500l-4.500 5.500h5" stroke="#2f2118" strokeWidth="4" /><path d="M7.500 9h5l-5 6h5.500M15.500 1.500h4.500l-4.500 5.500h5" stroke="#fff" strokeWidth="1.800" /></Svg></TrayItem>
        </Tray>
      </Taskbar>
    </Screen>
  );
}
